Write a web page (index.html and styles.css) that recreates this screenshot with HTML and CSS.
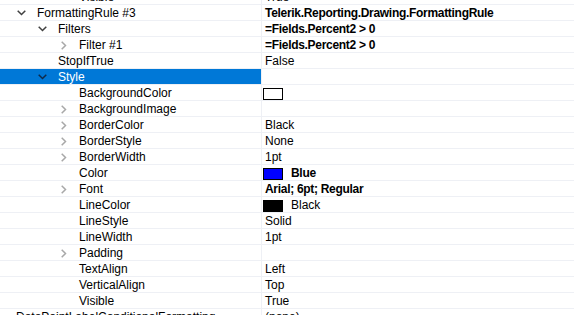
FILE: index.html
```html
<!DOCTYPE html>
<html lang="en">
<head>
    <meta charset="UTF-8">
    <title>Properties</title>
    <link rel="stylesheet" href="styles.css">
</head>
<body>

<div class="property-grid">
    <div class="row">
        <div class="name lvl3"><span class="toggle"></span><span>Visible</span></div>
        <div class="value">True</div>
    </div>
    <div class="row">
        <div class="name lvl1"><span class="toggle"><svg class="down" width="9" height="6" viewBox="0 0 9 6"><path d="M0.7 0.7 L4.5 4.5 L8.3 0.7"/></svg></span><span>FormattingRule #3</span></div>
        <div class="value bold">Telerik.Reporting.Drawing.FormattingRule</div>
    </div>
    <div class="row">
        <div class="name lvl2"><span class="toggle"><svg class="down" width="9" height="6" viewBox="0 0 9 6"><path d="M0.7 0.7 L4.5 4.5 L8.3 0.7"/></svg></span><span>Filters</span></div>
        <div class="value bold">=Fields.Percent2 &gt; 0</div>
    </div>
    <div class="row">
        <div class="name lvl3"><span class="toggle"><svg class="right" width="6" height="9" viewBox="0 0 6 9"><path d="M0.7 0.7 L4.5 4.5 L0.7 8.3"/></svg></span><span>Filter #1</span></div>
        <div class="value bold">=Fields.Percent2 &gt; 0</div>
    </div>
    <div class="row">
        <div class="name lvl2"><span class="toggle"></span><span>StopIfTrue</span></div>
        <div class="value">False</div>
    </div>
    <div class="row selected">
        <div class="name lvl2"><span class="toggle"><svg class="down" width="9" height="6" viewBox="0 0 9 6"><path d="M0.7 0.7 L4.5 4.5 L8.3 0.7"/></svg></span><span>Style</span></div>
        <div class="value"></div>
    </div>
    <div class="row">
        <div class="name lvl3"><span class="toggle"></span><span>BackgroundColor</span></div>
        <div class="value"><span class="swatch" style="background:#ffffff"></span></div>
    </div>
    <div class="row">
        <div class="name lvl3"><span class="toggle"><svg class="right" width="6" height="9" viewBox="0 0 6 9"><path d="M0.7 0.7 L4.5 4.5 L0.7 8.3"/></svg></span><span>BackgroundImage</span></div>
        <div class="value"></div>
    </div>
    <div class="row">
        <div class="name lvl3"><span class="toggle"><svg class="right" width="6" height="9" viewBox="0 0 6 9"><path d="M0.7 0.7 L4.5 4.5 L0.7 8.3"/></svg></span><span>BorderColor</span></div>
        <div class="value">Black</div>
    </div>
    <div class="row">
        <div class="name lvl3"><span class="toggle"><svg class="right" width="6" height="9" viewBox="0 0 6 9"><path d="M0.7 0.7 L4.5 4.5 L0.7 8.3"/></svg></span><span>BorderStyle</span></div>
        <div class="value">None</div>
    </div>
    <div class="row">
        <div class="name lvl3"><span class="toggle"><svg class="right" width="6" height="9" viewBox="0 0 6 9"><path d="M0.7 0.7 L4.5 4.5 L0.7 8.3"/></svg></span><span>BorderWidth</span></div>
        <div class="value">1pt</div>
    </div>
    <div class="row">
        <div class="name lvl3"><span class="toggle"></span><span>Color</span></div>
        <div class="value bold"><span class="swatch" style="background:#0000ff"></span>Blue</div>
    </div>
    <div class="row">
        <div class="name lvl3"><span class="toggle"><svg class="right" width="6" height="9" viewBox="0 0 6 9"><path d="M0.7 0.7 L4.5 4.5 L0.7 8.3"/></svg></span><span>Font</span></div>
        <div class="value bold">Arial; 6pt; Regular</div>
    </div>
    <div class="row">
        <div class="name lvl3"><span class="toggle"></span><span>LineColor</span></div>
        <div class="value"><span class="swatch" style="background:#000000"></span>Black</div>
    </div>
    <div class="row">
        <div class="name lvl3"><span class="toggle"></span><span>LineStyle</span></div>
        <div class="value">Solid</div>
    </div>
    <div class="row">
        <div class="name lvl3"><span class="toggle"></span><span>LineWidth</span></div>
        <div class="value">1pt</div>
    </div>
    <div class="row">
        <div class="name lvl3"><span class="toggle"><svg class="right" width="6" height="9" viewBox="0 0 6 9"><path d="M0.7 0.7 L4.5 4.5 L0.7 8.3"/></svg></span><span>Padding</span></div>
        <div class="value"></div>
    </div>
    <div class="row">
        <div class="name lvl3"><span class="toggle"></span><span>TextAlign</span></div>
        <div class="value">Left</div>
    </div>
    <div class="row">
        <div class="name lvl3"><span class="toggle"></span><span>VerticalAlign</span></div>
        <div class="value">Top</div>
    </div>
    <div class="row">
        <div class="name lvl3"><span class="toggle"></span><span>Visible</span></div>
        <div class="value">True</div>
    </div>
    <div class="row">
        <div class="name lvl0"><span>DataPointLabelConditionalFormatting</span></div>
        <div class="value">(none)</div>
    </div>
</div>

</body>
</html>
```

FILE: styles.css
```css
* {
    box-sizing: border-box;
}
body {
    margin: 0;
    padding: 0;
    background: #ffffff;
    font-family: 'Liberation Sans', Arial, sans-serif;
    font-size: 12px;
    color: #000000;
    overflow: hidden;
}
.property-grid {
    margin-top: -12px;
}
.row {
    display: flex;
    height: 16px;
    line-height: 15px;
    border-top: 1px solid #eef0f5;
}
.name {
    width: 261px;
    flex: none;
    display: flex;
    align-items: center;
    white-space: nowrap;
    overflow: hidden;
}
.name span:last-child,
.value {
    padding-top: 2px;
}
.lvl0 { padding-left: 16px; }
.lvl1 { padding-left: 17px; }
.lvl2 { padding-left: 38px; }
.lvl3 { padding-left: 59px; }
.toggle {
    width: 20px;
    height: 15px;
    flex: none;
    display: flex;
    align-items: center;
    padding-top: 1px;
}
.toggle svg {
    fill: none;
    stroke-width: 1.5;
}
.toggle .down {
    stroke: #404040;
}
.toggle .right {
    stroke: #a8a8a8;
    margin-left: 2px;
}
.value {
    flex: 1;
    border-left: 1px solid #eef0f5;
    padding-left: 3px;
    display: flex;
    align-items: center;
    white-space: nowrap;
}
.bold {
    font-weight: bold;
    letter-spacing: -0.3px;
}
.swatch {
    width: 20px;
    height: 12px;
    border: 1px solid #000000;
    margin-left: -2px;
    margin-right: 8px;
}
.selected .name {
    background-color: #0078d7;
    color: #ffffff;
}
.selected .toggle .down {
    stroke: #0f2a4a;
}
```
